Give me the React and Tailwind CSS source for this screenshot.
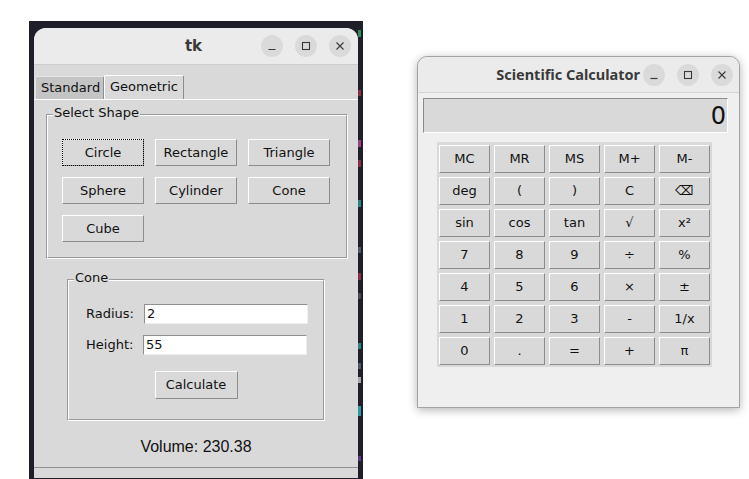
const relief =
  "bg-[#d9d9d9] border border-t-white border-l-white border-r-[#8c8c8c] border-b-[#8c8c8c]";

const WinControls = () => (
  <div className="flex items-center gap-[12px]">
    <span className="w-[22px] h-[22px] rounded-full bg-[#dadada] flex items-center justify-center">
      <svg width="10" height="10" viewBox="0 0 10 10">
        <path d="M1.5 8.5h7" stroke="#3a3a3a" strokeWidth="1.2" />
      </svg>
    </span>
    <span className="w-[22px] h-[22px] rounded-full bg-[#dadada] flex items-center justify-center">
      <svg width="10" height="10" viewBox="0 0 10 10">
        <rect x="1.5" y="1.5" width="7" height="7" fill="none" stroke="#3a3a3a" strokeWidth="1.1" />
      </svg>
    </span>
    <span className="w-[22px] h-[22px] rounded-full bg-[#dadada] flex items-center justify-center">
      <svg width="10" height="10" viewBox="0 0 10 10">
        <path d="M1.5 1.5l7 7M8.5 1.5l-7 7" stroke="#3a3a3a" strokeWidth="1.1" />
      </svg>
    </span>
  </div>
);

const Group = ({ label, className, children }) => (
  <div
    className={`relative border border-t-[#9a9a9a] border-l-[#9a9a9a] border-r-white border-b-white ${className}`}
  >
    <div className="h-full border border-t-white border-l-white border-r-[#9a9a9a] border-b-[#9a9a9a]">
      {children}
    </div>
    <span className="absolute -top-[10px] left-[6px] px-px bg-[#d9d9d9] text-[13px] leading-[16px] text-[#111]">
      {label}
    </span>
  </div>
);

const shapes = ["Circle", "Rectangle", "Triangle", "Sphere", "Cylinder", "Cone", "Cube"];

const keys = [
  "MC", "MR", "MS", "M+", "M-",
  "deg", "(", ")", "C", "⌫",
  "sin", "cos", "tan", "√", "x²",
  "7", "8", "9", "÷", "%",
  "4", "5", "6", "×", "±",
  "1", "2", "3", "-", "1/x",
  "0", ".", "=", "+", "π",
];

// slivers of the code editor showing behind the tk window
const codeBits = [
  { mt: "mt-[9px]", h: "h-[7px]", c: "bg-[#2f8f5a]" },
  { mt: "mt-[53px]", h: "h-[6px]", c: "bg-[#8a3040]" },
  { mt: "mt-[44px]", h: "h-[7px]", c: "bg-[#9a3f80]" },
  { mt: "mt-[13px]", h: "h-[7px]", c: "bg-[#8a3040]" },
  { mt: "mt-[33px]", h: "h-[7px]", c: "bg-[#2a8585]" },
  { mt: "mt-[40px]", h: "h-[6px]", c: "bg-[#50556a]" },
  { mt: "mt-[20px]", h: "h-[7px]", c: "bg-[#8a3040]" },
  { mt: "mt-[13px]", h: "h-[6px]", c: "bg-[#454a5a]" },
  { mt: "mt-[44px]", h: "h-[6px]", c: "bg-[#2a8585]" },
  { mt: "mt-[14px]", h: "h-[6px]", c: "bg-[#50556a]" },
  { mt: "mt-[8px]", h: "h-[6px]", c: "bg-[#a8a8a8]" },
  { mt: "mt-[23px]", h: "h-[10px]", c: "bg-[#2a9a9a]" },
  { mt: "mt-[40px]", h: "h-[5px]", c: "bg-[#5a3a80]" },
];

export default function App() {
  return (
    <div className="w-[749px] h-[479px] bg-white flex overflow-hidden font-['DejaVu_Sans',sans-serif] text-[#111]">
      {/* tk geometric window over the editor */}
      <div className="ml-[29px] mt-[21px] w-[334px] h-[458px] bg-[#1e1f29] flex">
        <div className="ml-[5px] mt-[7px] w-[324px] h-[450px] bg-[#d9d9d9] rounded-t-[12px] overflow-hidden flex flex-col">
          <div className="h-[37px] shrink-0 bg-[#ebebeb] border-b border-[#cdcdcd] grid grid-cols-[1fr_auto_1fr] items-center pr-[7px]">
            <div />
            <span className="font-bold text-[15px] text-[#3a3a3a] pl-[2px]">tk</span>
            <div className="flex justify-end">
              <WinControls />
            </div>
          </div>

          <div className="flex items-end pl-px mt-[10px] h-[24px]">
            <div className="w-[69px] h-[23px] bg-[#c4c4c4] border border-t-[#e6e6e6] border-l-[#e6e6e6] border-r-[#8c8c8c] border-b-0 rounded-t-[2px] text-[13px] leading-[21px] pl-[5px]">
              Standard
            </div>
            <div className="w-[80px] h-[24px] bg-[#d9d9d9] border border-t-white border-l-white border-r-[#8c8c8c] border-b-0 rounded-t-[2px] text-[13px] leading-[22px] pl-[5px]">
              Geometric
            </div>
          </div>

          <div className="border-t border-white flex-1 flex flex-col">
            <Group label="Select Shape" className="ml-[12px] mt-[14px] w-[302px] h-[145px]">
              <div className="grid grid-cols-[repeat(3,82px)] auto-rows-[27px] gap-[11px] pl-[14px] pt-[23px]">
                {shapes.map((s) => (
                  <button
                    key={s}
                    className={`${relief} text-[13px] text-[#111] ${
                      s === "Circle" ? "outline-1 outline-dotted outline-black -outline-offset-1" : ""
                    }`}
                  >
                    {s}
                  </button>
                ))}
              </div>
            </Group>

            <Group label="Cone" className="ml-[33px] mt-[20px] w-[258px] h-[142px]">
              <div className="flex flex-col pl-[17px] pt-[23px]">
                <div className="flex items-center h-[20px]">
                  <span className="w-[58px] text-[13px]">Radius:</span>
                  <div className="w-[164px] h-[20px] bg-white border border-t-[#8f8f8f] border-l-[#8f8f8f] border-r-[#eeeeee] border-b-[#eeeeee] text-[13px] leading-[18px] pl-[2px]">
                    2
                  </div>
                </div>
                <div className="flex items-center h-[20px] mt-[11px]">
                  <span className="w-[57px] text-[13px]">Height:</span>
                  <div className="w-[164px] h-[20px] bg-white border border-t-[#8f8f8f] border-l-[#8f8f8f] border-r-[#eeeeee] border-b-[#eeeeee] text-[13px] leading-[18px] pl-[2px]">
                    55
                  </div>
                </div>
                <button className={`${relief} self-center -ml-[17px] mt-[16px] w-[83px] h-[28px] text-[13px]`}>
                  Calculate
                </button>
              </div>
            </Group>

            <div className="mt-[17px] text-center font-['Liberation_Sans',Arial,sans-serif] text-[16px] leading-[18px] text-[#111]">
              Volume: 230.38
            </div>

            <div className="mt-auto h-[11px] border-t border-[#8f8f8f]" />
          </div>
        </div>
        <div className="w-[5px] flex flex-col">
          {codeBits.map((b, i) => (
            <div key={i} className={`${b.mt} ${b.h} ${b.c} w-[3px]`} />
          ))}
        </div>
      </div>

      {/* Scientific calculator window */}
      <div className="ml-[54px] mt-[56px] w-[323px] h-[352px] bg-[#efefef] border border-[#a3a3a3] rounded-t-[10px] shadow-[0_2px_10px_rgba(0,0,0,0.3)] flex flex-col">
        <div className="h-[36px] shrink-0 bg-[#ebebeb] rounded-t-[10px] border-b border-[#d3d3d3] flex items-center justify-end pr-[6px]">
          <span className="font-['Noto_Sans',sans-serif] font-bold text-[14.5px] text-[#3a3a3a] mr-[3px]">
            Scientific Calculator
          </span>
          <WinControls />
        </div>

        <div className="ml-[5px] mt-[5px] w-[305px] h-[35px] bg-[#d9d9d9] border border-t-[#8a8a8a] border-l-[#8a8a8a] border-r-white border-b-white flex items-center justify-end pr-px">
          <span className="text-[24px] leading-none text-[#111]">0</span>
        </div>

        <div className="ml-[19px] mt-[9px] w-[275px] bg-[#d9d9d9] pl-[2px] pr-[2px] pt-[3px] pb-[2px] grid grid-cols-[repeat(5,51px)] auto-rows-[28px] gap-[4px]">
          {keys.map((k) => (
            <button key={k} className={`${relief} text-[13px] text-[#111]`}>
              {k}
            </button>
          ))}
        </div>
      </div>
    </div>
  );
}
